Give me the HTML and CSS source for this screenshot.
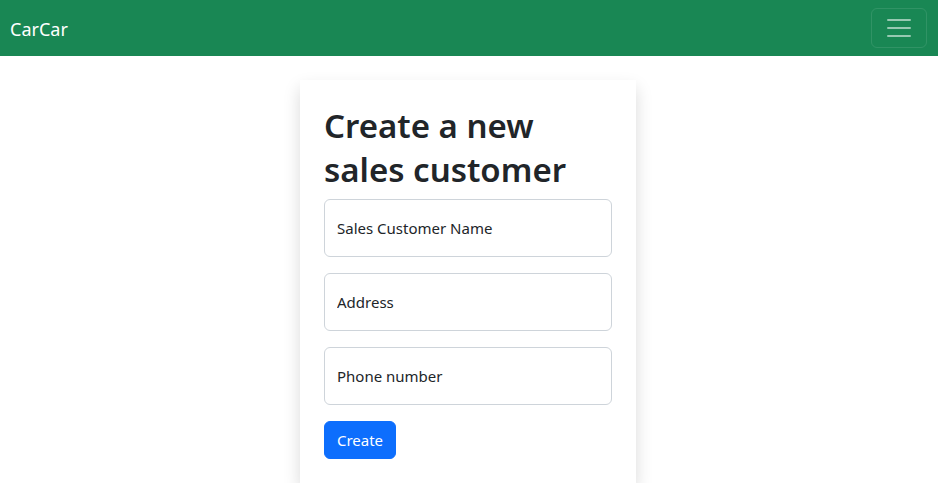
FILE: index.html
```html
<!DOCTYPE html>
<html lang="en">
<head>
<meta charset="utf-8">
<title>CarCar</title>
<link rel="stylesheet" href="styles.css">
</head>
<body>
<nav class="navbar">
  <a class="brand" href="#">CarCar</a>
  <button class="toggler" type="button" aria-label="Toggle navigation">
    <svg width="30" height="30" viewBox="0 0 30 30"><path d="M4 7h22M4 15h22M4 23h22" stroke="rgba(255,255,255,0.55)" stroke-width="2" stroke-linecap="round" fill="none"/></svg>
  </button>
</nav>
<main class="container">
  <div class="card">
    <h1 class="title">Create a new sales customer</h1>
    <form class="form">
      <input class="field" type="text" placeholder="Sales Customer Name">
      <input class="field" type="text" placeholder="Address">
      <input class="field" type="text" placeholder="Phone number">
      <button class="btn" type="button">Create</button>
    </form>
  </div>
</main>
</body>
</html>
```

FILE: styles.css
```css
* { box-sizing: border-box; }
body {
  margin: 0;
  font-family: "Noto Sans", "Open Sans", sans-serif;
  font-size: 15px;
  line-height: 24px;
  color: #212529;
  background: #fff;
}
.navbar {
  background: #198754;
  height: 56px;
  display: flex;
  align-items: center;
  justify-content: space-between;
  padding: 0 11px 0 10px;
}
.brand {
  color: #fff;
  text-decoration: none;
  font-size: 18px;
  line-height: 30px;
  padding-top: 1px;
}
.toggler {
  width: 56px;
  height: 40px;
  background: transparent;
  border: 1px solid rgba(255,255,255,0.1);
  border-radius: 6px;
  display: flex;
  align-items: center;
  justify-content: center;
  padding: 0;
}
.container {
  width: 336px;
  margin: 24px auto 0 300px;
}
.card {
  box-shadow: 0 8px 16px rgba(0,0,0,0.15);
  padding: 24px;
  background: #fff;
}
.title {
  margin: 0 0 8px;
  font-size: 33px;
  font-weight: 600;
  line-height: 43.5px;
}
.form {
  display: flex;
  flex-direction: column;
  align-items: flex-start;
  gap: 16px;
}
.field {
  width: 100%;
  height: 58px;
  border: 1px solid #ced4da;
  border-radius: 6px;
  padding: 0 12px;
  font: inherit;
  color: #212529;
}
.field::placeholder { color: #212529; opacity: 1; }
.btn {
  font: inherit;
  background: #0d6efd;
  color: #fff;
  border: 1px solid #0d6efd;
  border-radius: 6px;
  height: 38px;
  width: 72px;
  padding: 0;
}
```
